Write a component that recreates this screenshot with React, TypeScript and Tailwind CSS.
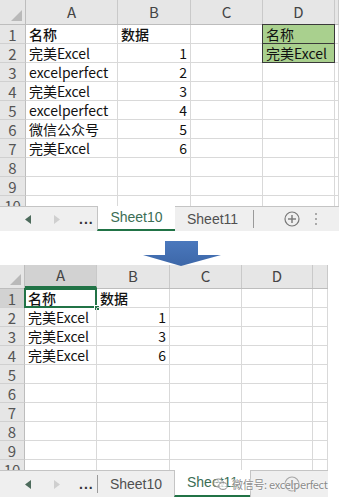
import React from "react";

const F = "font-['Noto_Sans_CJK_SC','Noto_Sans',sans-serif]";
const T = "font-['Liberation_Sans','Noto_Sans_CJK_SC',sans-serif]";

type Cell = { t?: string; right?: boolean; green?: boolean; bold?: boolean };

function Corner({ w }: { w: number }) {
  return (
    <div className="relative h-full shrink-0 border-r border-[#bdbdbd]" style={{ width: w }}>
      <svg className="absolute right-[3px] bottom-[3px]" width="11" height="11" viewBox="0 0 11 11">
        <polygon points="11,0 11,11 0,11" fill="#b9b9b9" />
      </svg>
    </div>
  );
}

function Sheet({
  widths,
  rowW,
  headH,
  data,
  selA1,
  rows,
}: {
  widths: number[];
  rowW: number;
  headH: number;
  data: Record<string, Cell>;
  selA1?: boolean;
  rows: number;
}) {
  const letters = ["A", "B", "C", "D", ""];
  return (
    <div className={`${F} flex flex-col`}>
      <div className="flex bg-[#e6e6e6] border-b border-[#bdbdbd]" style={{ height: headH }}>
        <Corner w={rowW} />
        {widths.map((w, i) => (
          <div
            key={i}
            className={`flex items-center justify-center shrink-0 text-[15px] text-[#444] border-r border-[#c9c9c9] ${
              selA1 && i === 0 ? "bg-[#d2d2d2] border-b-2 border-b-[#217346]" : ""
            }`}
            style={{ width: w }}
          >
            {letters[i]}
          </div>
        ))}
      </div>
      {Array.from({ length: rows }).map((_, r) => (
        <div key={r} className="flex h-[19px] shrink-0">
          <div
            className={`flex items-center justify-center shrink-0 text-[15px] leading-none text-[#555] border-r border-b border-r-[#bdbdbd] border-b-[#d0d0d0] ${
              selA1 && r === 0 ? "bg-[#d2d2d2]" : "bg-[#e6e6e6]"
            }`}
            style={{ width: rowW }}
          >
            {r + 1}
          </div>
          {widths.map((w, c) => {
            const cell = data[`${r}-${c}`];
            const isSel = selA1 && r === 0 && c === 0;
            const border = cell?.green
              ? "bg-[#a9d08e] border border-[#3a3a3a] -ml-px -mt-px"
              : "border-r border-b border-[#d9d9d9]";
            return (
              <div
                key={c}
                className={`relative flex items-center shrink-0 text-[14px] leading-none text-[#111] whitespace-nowrap ${border} ${
                  cell?.right ? "justify-end pr-[3px]" : "pl-[3px]"
                } ${cell?.bold ? "font-medium" : ""}`}
                style={{ width: cell?.green ? w + 1 : w, height: cell?.green ? 20 : undefined }}
              >
                {cell?.t}
                {isSel && (
                  <>
                    <div className="absolute left-[-1px] top-[-1px] right-[-1px] bottom-[-1px] border-2 border-[#217346]" />
                    <div className="absolute right-[-4px] bottom-[-4px] w-[6px] h-[6px] bg-[#217346] border border-white" />
                  </>
                )}
              </div>
            );
          })}
        </div>
      ))}
    </div>
  );
}

function NavArrows() {
  return (
    <div className="flex items-center shrink-0 w-[97px] h-full">
      <svg className="ml-[25px]" width="6" height="9" viewBox="0 0 6 9">
        <polygon points="6,0 6,9 0,4.5" fill="#4d6b5c" />
      </svg>
      <svg className="ml-[23px]" width="6" height="9" viewBox="0 0 6 9">
        <polygon points="0,0 0,9 6,4.5" fill="#cfcfcf" />
      </svg>
      <span className="ml-[19px] text-[14px] leading-none text-[#333] font-bold tracking-[1px]">...</span>
    </div>
  );
}

function PlusCircle({ faint }: { faint?: boolean }) {
  return (
    <svg width="16" height="16" viewBox="0 0 16 16" className={faint ? "opacity-60" : ""}>
      <circle cx="8" cy="8" r="7" fill="none" stroke="#777" strokeWidth="1.2" />
      <line x1="8" y1="4" x2="8" y2="12" stroke="#777" strokeWidth="1.4" />
      <line x1="4" y1="8" x2="12" y2="8" stroke="#777" strokeWidth="1.4" />
    </svg>
  );
}

export default function App() {
  const top: Record<string, Cell> = {
    "0-0": { t: "名称", bold: true },
    "0-1": { t: "数据", bold: true },
    "1-0": { t: "完美Excel" },
    "2-0": { t: "excelperfect" },
    "3-0": { t: "完美Excel" },
    "4-0": { t: "excelperfect" },
    "5-0": { t: "微信公众号" },
    "6-0": { t: "完美Excel" },
    "1-1": { t: "1", right: true },
    "2-1": { t: "2", right: true },
    "3-1": { t: "3", right: true },
    "4-1": { t: "4", right: true },
    "5-1": { t: "5", right: true },
    "6-1": { t: "6", right: true },
    "0-3": { t: "名称", green: true },
    "1-3": { t: "完美Excel", green: true },
  };
  const bottom: Record<string, Cell> = {
    "0-0": { t: "名称", bold: true },
    "0-1": { t: "数据", bold: true },
    "1-0": { t: "完美Excel" },
    "2-0": { t: "完美Excel" },
    "3-0": { t: "完美Excel" },
    "1-1": { t: "1", right: true },
    "2-1": { t: "3", right: true },
    "3-1": { t: "6", right: true },
  };

  return (
    <div className={`${F} w-[339px] h-[497px] bg-white overflow-hidden flex flex-col`}>
      {/* top sheet */}
      <div className="h-[206px] overflow-hidden shrink-0">
        <Sheet widths={[92, 73, 72, 72, 4]} rowW={26} headH={25} data={top} rows={10} />
      </div>
      {/* top tab bar */}
      <div className={`${T} h-[25px] shrink-0 flex bg-[#efefef] text-[14px]`}>
        <div className="flex border-t border-[#c4c4c4] h-full">
          <NavArrows />
        </div>
        <div className="w-[78px] h-full bg-white border-l border-[#c4c4c4] border-b-2 border-b-[#217346] flex items-center justify-center text-[#3b6e55] shrink-0">
          Sheet10
        </div>
        <div className="flex-1 flex items-center border-t border-[#c4c4c4]">
          <span className="ml-[12px] text-[#505050]">Sheet11</span>
          <div className="ml-[15px] w-px h-[18px] bg-[#9a9a9a]" />
          <div className="ml-[30px] flex items-center">
            <PlusCircle />
          </div>
          <div className="ml-[15px] flex flex-col gap-[3px]">
            <div className="w-[2px] h-[2px] bg-[#aaa]" />
            <div className="w-[2px] h-[2px] bg-[#aaa]" />
            <div className="w-[2px] h-[2px] bg-[#aaa]" />
          </div>
        </div>
      </div>
      {/* arrow */}
      <div className="h-[34px] shrink-0 relative">
        <svg className="absolute left-[143px] top-[10px]" width="78" height="25" viewBox="0 0 78 25">
          <defs>
            <linearGradient id="ag" x1="0" y1="0" x2="0" y2="1">
              <stop offset="0" stopColor="#4a78bd" />
              <stop offset="1" stopColor="#3d67a8" />
            </linearGradient>
          </defs>
          <polygon points="22,0 55,0 55,14 78,14 38,25 0,14 22,14" fill="url(#ag)" />
        </svg>
      </div>
      {/* bottom sheet */}
      <div className="h-[205px] overflow-hidden shrink-0 w-[328px]">
        <Sheet widths={[72, 73, 72, 71, 15]} rowW={25} headH={24} data={bottom} selA1 rows={10} />
      </div>
      {/* bottom tab bar */}
      <div className={`${T} h-[27px] shrink-0 flex text-[14px] relative`}>
        <div className="flex bg-[#efefef] border-t border-[#c4c4c4] h-full">
          <NavArrows />
          <div className="w-px h-[18px] bg-[#9a9a9a] self-center" />
          <div className="w-[76px] flex items-center justify-center text-[#505050]">Sheet10</div>
        </div>
        <div className="w-[76px] h-full bg-white border-l border-[#c4c4c4] border-b-2 border-b-[#217346] flex items-center pl-[12px] text-[#3b6e55] shrink-0">
          Sheet11
        </div>
        <div className="w-[78px] h-full bg-[#efefef] border-t border-l border-[#c4c4c4] flex items-center pl-[33px]">
          <PlusCircle faint />
        </div>
        {/* watermark */}
        <div className={`${F} absolute left-[213px] top-[6px] flex items-center gap-[4px] text-[11px] text-[#8a8a8a] [text-shadow:0_0_2px_#fff,0_0_2px_#fff] whitespace-nowrap`}>
          <svg width="15" height="13" viewBox="0 0 15 13">
            <ellipse cx="5.5" cy="5" rx="5" ry="4" fill="#fff" fillOpacity="0.7" stroke="#8a8a8a" strokeWidth="1" />
            <ellipse cx="10" cy="8" rx="4.2" ry="3.4" fill="#fff" fillOpacity="0.7" stroke="#8a8a8a" strokeWidth="1" />
            <circle cx="4" cy="4.5" r="0.7" fill="#8a8a8a" />
            <circle cx="7" cy="4.5" r="0.7" fill="#8a8a8a" />
          </svg>
          <span className="tracking-[-0.3px]">微信号: excelperfect</span>
        </div>
      </div>
    </div>
  );
}
